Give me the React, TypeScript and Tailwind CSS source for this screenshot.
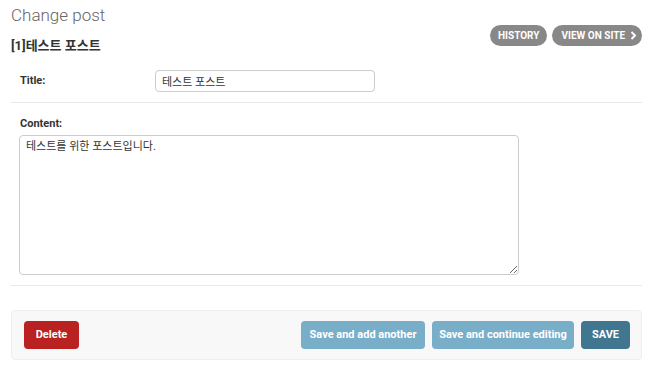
export default function App() {
  const font = { fontFamily: 'Roboto, "Noto Sans CJK KR", sans-serif' };
  return (
    <div className="min-h-[367px] bg-white px-[11px] text-[#333]" style={font}>
      <h1 className="pt-[3px] text-[17px] font-light leading-[24px] text-[#666]">Change post</h1>

      <div className="mt-[-2px]">
        <ul className="float-right flex gap-[5px]">
          <li>
            <a className="flex h-[21px] items-center rounded-full bg-[#888] px-[8px] text-[10px] font-bold uppercase text-white">
              History
            </a>
          </li>
          <li>
            <a className="flex h-[21px] items-center gap-[5px] rounded-full bg-[#888] pl-[9px] pr-[5px] text-[10px] font-bold uppercase text-white">
              View on site
              <svg width="7" height="9" viewBox="0 0 7 9" fill="none">
                <path d="M1.5 1l3.5 3.5-3.5 3.5" stroke="white" strokeWidth="2" />
              </svg>
            </a>
          </li>
        </ul>
        <h2 className="pt-[12px] text-[13px] font-bold leading-[18px] text-[#333]">[1]테스트 포스트</h2>
      </div>

      <fieldset className="mt-[5px]">
        <div className="flex items-center border-b border-[#e8e8e8] py-[10px] pl-[9px]">
          <label className="w-[135px] text-[11px] font-bold text-[#333]">Title:</label>
          <input
            className="h-[22px] w-[220px] rounded-[4px] border border-[#ccc] px-[6px] text-[11px] text-[#333] outline-none"
            defaultValue="테스트 포스트"
          />
        </div>
        <div className="border-b border-[#e8e8e8] pb-[10px] pl-[8px] pt-[14px]">
          <label className="block pl-[1px] text-[11px] font-bold leading-[14px] text-[#333]">Content:</label>
          <textarea
            className="mt-[4px] block h-[140px] w-[500px] rounded-[4px] border border-[#ccc] px-[6px] py-[3px] text-[11px] leading-[16px] text-[#333] outline-none"
            defaultValue="테스트를 위한 포스트입니다."
          />
        </div>
      </fieldset>

      <div className="mt-[24px] flex items-center rounded-[4px] border border-[#eee] bg-[#f8f8f8] py-[10px] pl-[12px] pr-[11px]">
        <a className="flex h-[28px] w-[55px] items-center justify-center rounded-[4px] bg-[#ba2121] text-[11px] font-bold text-white">
          Delete
        </a>
        <div className="ml-auto flex gap-[7px]">
          <button className="h-[28px] w-[124px] rounded-[4px] bg-[#79aec8] text-[11px] font-bold text-white">
            Save and add another
          </button>
          <button className="h-[28px] w-[142px] rounded-[4px] bg-[#79aec8] text-[11px] font-bold text-white">
            Save and continue editing
          </button>
          <button className="h-[28px] w-[49px] rounded-[4px] bg-[#417690] text-[11px] font-bold text-white">
            SAVE
          </button>
        </div>
      </div>
    </div>
  );
}
